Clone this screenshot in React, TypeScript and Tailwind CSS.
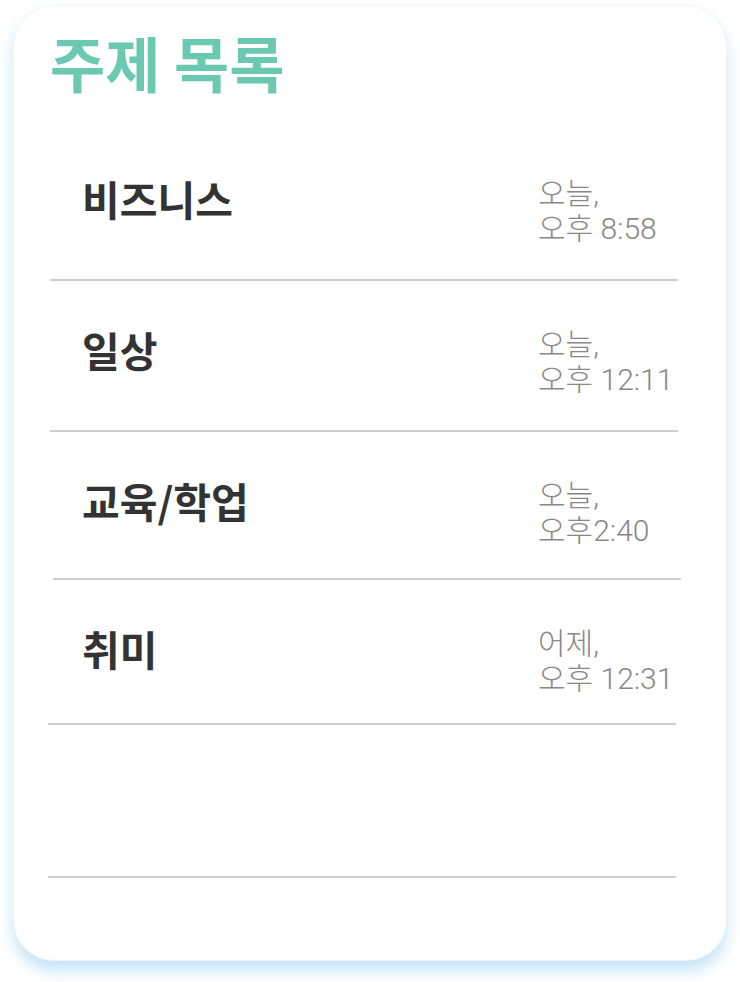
const topics = [
  { name: "비즈니스", day: "오늘,", time: "오후 8:58", h: "h-[149px]", line: "ml-0" },
  { name: "일상", day: "오늘,", time: "오후 12:11", h: "h-[149px]", line: "ml-0" },
  { name: "교육/학업", day: "오늘,", time: "오후2:40", h: "h-[146px]", line: "ml-[3px]" },
  { name: "취미", day: "어제,", time: "오후 12:31", h: "h-[143px]", line: "-ml-[2px]" },
];

export default function App() {
  return (
    <div className="min-h-[982px] w-[740px] bg-white pt-[6px] pl-[14px]">
      <div className="h-[954px] w-[712px] rounded-[40px] bg-white shadow-[0_10px_16px_rgba(150,205,240,0.6)] ring-1 ring-[#eef6fb]">
        <h1 className="pl-[36px] pt-[20px] font-['Noto_Sans_CJK_KR',sans-serif] text-[60px] font-bold leading-[72px] text-[#6cc9b1]">
          주제 목록
        </h1>
        <div className="mt-[32px] ml-[36px] w-[628px]">
          {topics.map((t) => (
            <div key={t.name}>
              <div className={`${t.h} flex items-start justify-between pt-[44px]`}>
                <span className="pl-[32px] font-['Noto_Sans_CJK_KR',sans-serif] text-[41px] font-bold leading-[48px] text-[#333]">
                  {t.name}
                </span>
                <span className="w-[140px] whitespace-nowrap pt-[2px] font-['Roboto','Noto_Sans_CJK_KR',sans-serif] text-[30px] font-light leading-[35px] text-[#888]">
                  {t.day}
                  <br />
                  {t.time}
                </span>
              </div>
              <div className={`h-[2px] w-[628px] bg-[#d0cdcd] ${t.line}`} />
            </div>
          ))}
          <div className="h-[151px]" />
          <div className="-ml-[2px] h-[2px] w-[628px] bg-[#d0cdcd]" />
        </div>
      </div>
    </div>
  );
}
